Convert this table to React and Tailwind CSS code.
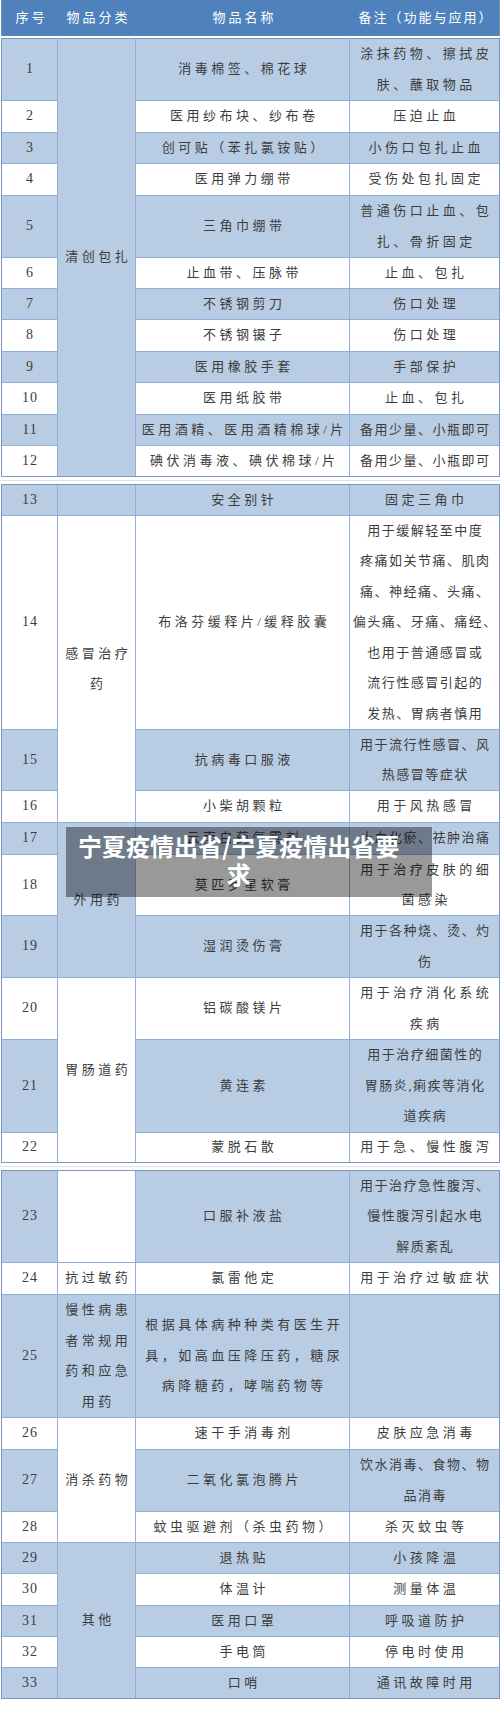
const FONT = { fontFamily: '"Liberation Serif", "Noto Sans CJK SC", serif' };

const section1 = {
  rows: "grid-rows-[61px_31px_30px_31px_61px_30px_30px_31px_30px_31px_30px_30px]",
  items: [
    { n: 1, cat: { text: "清创包扎", span: "row-span-12", bg: "blue" }, name: "消毒棉签、棉花球", note: ["涂抹药物、擦拭皮", "肤、蘸取物品"] },
    { n: 2, name: "医用纱布块、纱布卷", note: "压迫止血" },
    { n: 3, name: "创可贴（苯扎氯铵贴）", note: "小伤口包扎止血" },
    { n: 4, name: "医用弹力绷带", note: "受伤处包扎固定" },
    { n: 5, name: "三角巾绷带", note: ["普通伤口止血、包", "扎、骨折固定"] },
    { n: 6, name: "止血带、压脉带", note: "止血、包扎" },
    { n: 7, name: "不锈钢剪刀", note: "伤口处理" },
    { n: 8, name: "不锈钢镊子", note: "伤口处理" },
    { n: 9, name: "医用橡胶手套", note: "手部保护" },
    { n: 10, name: "医用纸胶带", note: "止血、包扎" },
    { n: 11, name: "医用酒精、医用酒精棉球/片", note: "备用少量、小瓶即可", tight: true },
    { n: 12, name: "碘伏消毒液、碘伏棉球/片", note: "备用少量、小瓶即可", tight: true },
  ],
};

const section2 = {
  rows: "grid-rows-[30px_213px_60px_31px_31px_60px_61px_61px_92px_29px]",
  items: [
    { n: 13, cat: { text: "", span: "", bg: "blue" }, name: "安全别针", note: "固定三角巾" },
    {
      n: 14,
      cat: { text: ["感冒治疗", "药"], span: "row-span-3", bg: "white" },
      name: "布洛芬缓释片/缓释胶囊",
      note: ["用于缓解轻至中度", "疼痛如关节痛、肌肉", "痛、神经痛、头痛、", "偏头痛、牙痛、痛经、", "也用于普通感冒或", "流行性感冒引起的", "发热、胃病者慎用"],
      tight: true,
    },
    { n: 15, name: "抗病毒口服液", note: ["用于流行性感冒、风", "热感冒等症状"], tight: true },
    { n: 16, name: "小柴胡颗粒", note: "用于风热感冒" },
    { n: 17, cat: { text: "外用药", span: "row-span-3", bg: "blue" }, name: "云南白药气雾剂", note: "止血化瘀、祛肿治痛", tight: true },
    { n: 18, name: "莫匹罗星软膏", note: ["用于治疗皮肤的细", "菌感染"] },
    { n: 19, name: "湿润烫伤膏", note: ["用于各种烧、烫、灼", "伤"], tight: true },
    { n: 20, cat: { text: "胃肠道药", span: "row-span-3", bg: "white" }, name: "铝碳酸镁片", note: ["用于治疗消化系统", "疾病"] },
    { n: 21, name: "黄连素", note: ["用于治疗细菌性的", "胃肠炎,痢疾等消化", "道疾病"], tight: true },
    { n: 22, name: "蒙脱石散", note: "用于急、慢性腹泻" },
  ],
};

const section3 = {
  rows: "grid-rows-[91px_31px_122px_31px_61px_30px_30px_31px_30px_30px_30px]",
  items: [
    { n: 23, cat: { text: "", span: "", bg: "white" }, name: "口服补液盐", note: ["用于治疗急性腹泻、", "慢性腹泻引起水电", "解质紊乱"], tight: true },
    { n: 24, cat: { text: "抗过敏药", span: "", bg: "white" }, name: "氯雷他定", note: "用于治疗过敏症状" },
    {
      n: 25,
      cat: { text: ["慢性病患", "者常规用", "药和应急", "用药"], span: "", bg: "blue" },
      name: ["根据具体病种种类有医生开", "具，如高血压降压药，糖尿", "病降糖药，哮喘药物等"],
      note: "",
    },
    { n: 26, cat: { text: "消杀药物", span: "row-span-3", bg: "white" }, name: "速干手消毒剂", note: "皮肤应急消毒" },
    { n: 27, name: "二氧化氯泡腾片", note: ["饮水消毒、食物、物", "品消毒"], tight: true },
    { n: 28, name: "蚊虫驱避剂（杀虫药物）", note: "杀灭蚊虫等" },
    { n: 29, cat: { text: "其他", span: "row-span-5", bg: "blue" }, name: "退热贴", note: "小孩降温" },
    { n: 30, name: "体温计", note: "测量体温" },
    { n: 31, name: "医用口罩", note: "呼吸道防护" },
    { n: 32, name: "手电筒", note: "停电时使用" },
    { n: 33, name: "口哨", note: "通讯故障时用" },
  ],
};

function Cell({ text, bg, span = "", tracking = "tracking-[3.5px] pl-[3.5px] text-[13px]" }) {
  const lines = Array.isArray(text) ? text : [text];
  return (
    <div className={`${bg === "blue" ? "bg-[#b8cce4]" : "bg-white"} ${span} flex flex-col items-center justify-center text-center leading-[30.5px] text-[#3d3d3d] ${tracking}`}>
      {lines.map((l, i) => (
        <div key={i} className="whitespace-nowrap">{l}</div>
      ))}
    </div>
  );
}

function Section({ data }) {
  return (
    <div className={`ml-px w-[499px] grid grid-cols-[55px_77px_213px_149px] ${data.rows} gap-px bg-[#8eaddb] border border-[#7b98c4]`}>
      {data.items.flatMap((r) => {
        const bg = r.n % 2 === 1 ? "blue" : "white";
        const out = [<Cell key={`n${r.n}`} text={String(r.n)} bg={bg} tracking="tracking-[1px] pl-px text-[14px]" />];
        if (r.cat) out.push(<Cell key={`c${r.n}`} text={r.cat.text} bg={r.cat.bg} span={r.cat.span} />);
        out.push(<Cell key={`m${r.n}`} text={r.name} bg={bg} />);
        out.push(
          <Cell
            key={`t${r.n}`}
            text={r.note}
            bg={bg}
            tracking={r.tight ? "tracking-[1.5px] pl-[1.5px] text-[13px]" : "tracking-[3.5px] pl-[3.5px] text-[13px]"}
          />
        );
        return out;
      })}
    </div>
  );
}

function PageBreak() {
  return (
    <div className="h-[7px] flex flex-col justify-center">
      <div className="h-px bg-[#e2e2e2]" />
    </div>
  );
}

export default function App() {
  return (
    <div className="relative w-[500px] h-[1725px] bg-white overflow-hidden" style={FONT}>
      <div className="ml-px w-[499px] h-[36px] bg-[#4f81bd] border-x border-[#6f8fbd] grid grid-cols-[56px_78px_214px_150px] items-center text-white text-[13px] tracking-[3px] text-center">
        <div className="pl-[3px]">序号</div>
        <div className="pl-[3px]">物品分类</div>
        <div className="pl-[3px]">物品名称</div>
        <div className="pl-[2px] tracking-[2px]">备注（功能与应用）</div>
      </div>
      <div className="h-[2px]" />
      <Section data={section1} />
      <PageBreak />
      <Section data={section2} />
      <PageBreak />
      <Section data={section3} />

      <div className="absolute left-[66px] top-[827px] w-[366px] h-[70px] bg-black/40 pl-[12px] pt-[5px]">
        <div
          className="inline-block text-center text-white font-bold text-[24px] leading-[28px]"
          style={{ fontFamily: '"Noto Sans CJK SC", "Noto Sans", sans-serif' }}
        >
          <div className="whitespace-nowrap">宁夏疫情出省/宁夏疫情出省要</div>
          <div>求</div>
        </div>
      </div>
    </div>
  );
}
